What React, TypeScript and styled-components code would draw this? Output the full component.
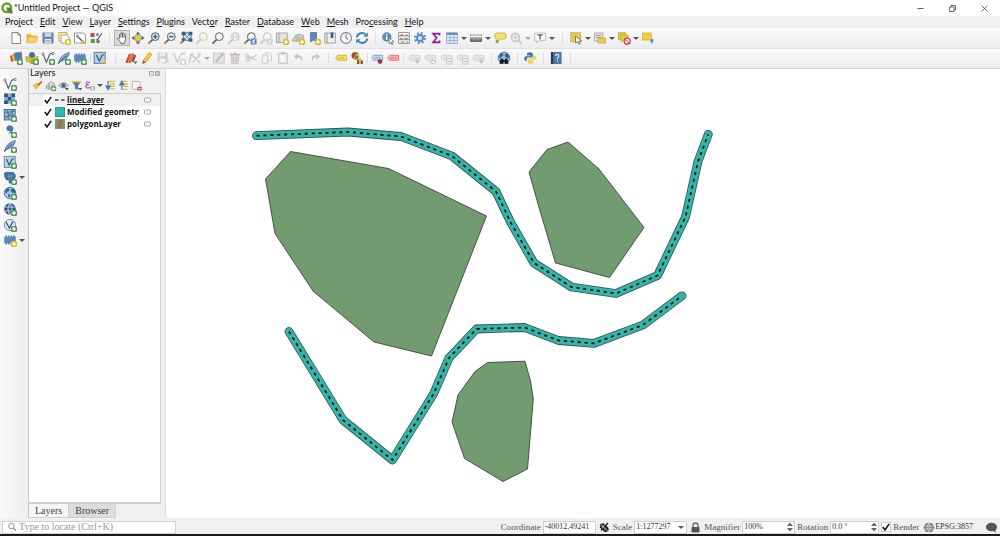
import React, { ReactNode } from 'react';
import styled, { createGlobalStyle, css } from 'styled-components';

const UI = 'Lato, "Open Sans", sans-serif';
const UI_BOLD = '"Open Sans", "Noto Sans", sans-serif';
const STATUS = '"Liberation Serif", serif';

const GlobalStyle = createGlobalStyle`
  * { box-sizing: border-box; }
  body { margin: 0; background: #f0f0f0; color: #111; font-family: ${UI}; font-size: 9px; line-height: 12px; }
  button, input, select { font: inherit; color: inherit; margin: 0; padding: 0; border: 0; background: none; }
  svg { display: block; }
`;

/* ---------- icon artwork, drawn on a 16 × 16 grid ---------- */

const BLUE = '#5a8ac0';
const NAVY = '#34618f';
const GREEN = '#4f9a52';
const YELLOW = '#f2cf3a';
const GREY = '#8d8d8d';

const Badge = ({ c = GREEN }: { c?: string }) => (
  <g>
    <rect x="9" y="9" width="6" height="6" rx="1.6" fill={c} />
    <path d="M12 10.2v3.6M10.2 12h3.6" stroke="#fff" strokeWidth="1.6" />
  </g>
);

const Lens = ({ c = '#5f5f5f', fill = '#f4f8fc', children }: { c?: string; fill?: string; children?: ReactNode }) => (
  <g>
    <path d="M6.6 9.6L2.4 13.6" stroke={c} strokeWidth="1.8" />
    <path d="M4 12L2.4 13.6" stroke="#d8b04a" strokeWidth="1.6" opacity={c === '#5f5f5f' ? 1 : 0} />
    <circle cx="9.3" cy="6.6" r="3.9" fill={fill} stroke={c} strokeWidth="1" />
    {children}
  </g>
);

const Page = ({ c = '#777' }: { c?: string }) => (
  <path d="M4 2.5h6l2.5 2.5v8.5H4zM10 2.5V5h2.5" fill="#fff" stroke={c} strokeWidth=".9" />
);

const Globe = ({ fill = '#a9c6e4', land = NAVY }: { fill?: string; land?: string }) => (
  <g>
    <circle cx="8" cy="8" r="5.8" fill={fill} stroke={NAVY} strokeWidth=".8" />
    <path d="M3.4 5.2l2.3-2 2 .8-.7 2-1.6.8-.6 1.8-1.4-.8zM8.6 4.2l2.8-.6 1.8 2.2-.6 2.6-2-.6-1.6-1.4zM6 9l2.4.8-.6 2.8-1.4-.6z" fill={land} />
  </g>
);

const Label = ({ fill, stroke }: { fill: string; stroke: string }) => (
  <g>
    <path d="M2.6 7.8l2-2.5h9v5h-9z" fill={fill} stroke={stroke} strokeWidth=".8" />
    <path d="M6 7v1.8M8.2 6.6v2.4M10.4 7v2" stroke={stroke} strokeWidth=".8" />
  </g>
);

const VLine = ({ c = '#4a5a60' }: { c?: string }) => (
  <g>
    <path d="M3 4l3.4 8.4L9.6 4.6q.8-1.4 3.4-1.2" fill="none" stroke={c} strokeWidth="1.1" />
    <path d="M2 3h2v2H2zM12 2.5h2v2h-2z" fill="#fff" stroke={c} strokeWidth=".6" />
  </g>
);

const art: Record<string, ReactNode> = {
  newFile: <Page />,
  open: <><path d="M2.5 12.5V4h4l1 1.5h5V7" fill="#e8b93a" /><path d="M2.5 12.8L4.6 7H14l-2 5.8z" fill="#f6d36a" stroke="#d9a52c" strokeWidth=".5" /></>,
  save: <><rect x="2.5" y="2.5" width="11" height="11" rx=".8" fill="#5f84a8" /><rect x="4.6" y="2.8" width="6.8" height="4" fill="#c9d8e6" /><rect x="4.6" y="9" width="6.8" height="4.2" fill="#e8eef4" /><path d="M5.5 11h5" stroke="#5f84a8" /></>,
  layout: <><path d="M2.8 2.5h8v8.6h-8z" fill="#fff4c4" stroke="#d8ad2b" /><path d="M5 5h6l2 2v6H5z" fill="#fff" stroke={GREY} strokeWidth=".8" /><Badge c="#e6bf25" /></>,
  layoutManager: <><path d="M2.5 3h9l2 2v8h-11z" fill="#fff" stroke={GREY} strokeWidth=".9" /><path d="M5 6l6.8 6.4" stroke="#666" strokeWidth="1.5" /><circle cx="5.4" cy="6" r="1.6" fill="#7d9cbb" /><path d="M10 11l3.6 2.8" stroke="#e0b422" strokeWidth="2" /></>,
  style: <><rect x="2.5" y="3" width="4" height="4" fill="#c9473f" /><circle cx="9.5" cy="4.5" r="1.5" fill={BLUE} /><path d="M14 3l-4 6-1.6 1" stroke="#555" strokeWidth="1.1" fill="none" /><rect x="2.8" y="9" width="4" height="4" fill={GREEN} /><circle cx="10" cy="11.6" r="1.8" fill="#777" /></>,
  hand: <path d="M5.6 8.6V4.2q.8-1.2 1.4 0V3q.8-1.2 1.5 0v.6q.8-1 1.5 0v1q.9-.8 1.4.2v4.6q0 2-1 2.8v1.4H6.8v-1.2L3.4 8.8q.4-1.4 2.2-.2zM7 4v3.6M8.5 3.6v4M10 4.4v3.4" fill="#fff" stroke="#4c4c4c" strokeWidth=".8" />,
  panSel: <><rect x="5.5" y="5.5" width="5" height="5" fill={YELLOW} stroke="#c79c1d" strokeWidth=".7" /><path d="M8 1.5l2.3 3H5.7zM8 14.5l2.3-3H5.7zM1.5 8l3-2.3v4.6zM14.5 8l-3-2.3v4.6z" fill={NAVY} /></>,
  zoomIn: <Lens fill="#cfe0f2"><path d="M9.3 4.4v4.4M7.1 6.6h4.4" stroke={NAVY} strokeWidth="1.4" /></Lens>,
  zoomOut: <Lens fill="#e3edf8"><path d="M7.1 6.6h4.4" stroke={NAVY} strokeWidth="1.4" /></Lens>,
  zoomFull: <><Lens fill="#d3e1f0" /><path d="M3.6 1.8h4v3.4h-4zM10.6 1.8h3.8v3.4h-3.8zM10.6 8.2h3.8v3.6h-3.8zM3.6 8.2h3v2h-3z" fill={NAVY} /><path d="M7.8 5.2l3 3M10.8 5.2l-3 3" stroke={BLUE} strokeWidth=".9" /></>,
  zoomSel: <Lens c="#c9c9c4" fill="#f6f3de" />,
  zoomLayer: <Lens c="#666" fill="#f2f2f2" />,
  zoomNative: <Lens c="#c4c4c4" fill="#f4f4f4"><path d="M7.4 5v3.4M11 5v3.4M9.2 5.4v.8M9.2 7.4v.8" stroke="#b8b8b8" strokeWidth=".9" /></Lens>,
  zoomLast: <><Lens /><rect x="8.6" y="8.6" width="6" height="6" rx="1" fill={BLUE} /><path d="M12.8 9.8L10.6 11.6l2.2 1.8" stroke="#fff" strokeWidth="1.1" fill="none" /></>,
  zoomNext: <><Lens c="#c6c6c6" fill="#f6f6f6" /><rect x="8.6" y="8.6" width="6" height="6" rx="1" fill="#cfd6dc" /><path d="M10.6 9.8l2.2 1.8-2.2 1.8" stroke="#fff" fill="none" /></>,
  mapView: <><path d="M2.5 3h10.8v9.5H2.5z" fill="#e4e4de" stroke="#a2a29c" strokeWidth=".9" /><path d="M5 3v9.5" stroke="#a2a29c" /><Badge c="#dfb92b" /></>,
  view3d: <><path d="M2 11l3.4-5.5q4-2.6 8 0l.6 6z" fill="#d0d0ca" stroke="#9c9c98" strokeWidth=".8" /><path d="M5 8h8M8 5l-1 6" stroke="#9c9c98" strokeWidth=".6" /><Badge c="#dfb92b" /></>,
  bookmarkAdd: <><path d="M4.5 2.5h6v9.6l-3-2-3 2z" fill={BLUE} stroke={NAVY} strokeWidth=".6" /><Badge c="#dfb92b" /></>,
  bookmark: <><path d="M2.8 3h10.6v10H2.8z" fill="#eeeeea" stroke="#9a9a96" strokeWidth=".9" /><path d="M5 3v10" stroke="#9a9a96" /><path d="M8.6 2.6h2.8v6L10 7.4 8.6 8.6z" fill={NAVY} /></>,
  clock: <><circle cx="8" cy="8" r="5.4" fill="#f7f9fb" stroke="#75818c" strokeWidth="1.1" /><path d="M8 4.4V8l2 1.6" stroke="#666" fill="none" /></>,
  refresh: <><path d="M2.8 7.4a5.2 5.2 0 0 1 9-2.6M13.2 8.6a5.2 5.2 0 0 1-9 2.6" stroke="#3f7fc0" strokeWidth="2" fill="none" /><path d="M13.8 2.4v4.4H9.4zM2.2 13.6V9.2h4.4z" fill="#3f7fc0" /></>,
  identify: <><circle cx="6.8" cy="7" r="4.7" fill={BLUE} /><path d="M6.8 6.2v3.6M6.8 4v1.3" stroke="#fff" strokeWidth="1.5" /><path d="M9 7.6l5 4.2-2.4.2 1.2 2.2-1 .4-1-2.2-1.6 1.4z" fill="#fff" stroke="#444" strokeWidth=".6" /></>,
  abacus: <><path d="M2.6 2.5h10.8v11H2.6zM2.6 6h10.8M2.6 9.6h10.8" fill="none" stroke="#85857e" strokeWidth=".8" /><path d="M4.4 5.2h3M9.6 5.2h2" stroke="#c0605a" strokeWidth="1.4" /><path d="M4 8.7h2.6M8.4 8.7h3.4" stroke="#5faa62" strokeWidth="1.4" /><path d="M5 12h3.4M10 12h2" stroke="#858580" strokeWidth="1.2" /></>,
  gear: <><circle cx="8" cy="8" r="3" fill="#dfe9f4" stroke={BLUE} strokeWidth="2" /><circle cx="8" cy="8" r="5" fill="none" stroke={BLUE} strokeWidth="2" strokeDasharray="2 1.93" /></>,
  sigma: <path d="M11.6 5.4V3.6H5L8.6 8 5 12.4h6.6v-1.8" fill="none" stroke="#8c1a96" strokeWidth="1.6" />,
  table: <><path d="M2.5 2.8h11v10.6h-11z" fill="#e5eef7" stroke="#8aa7c4" strokeWidth=".8" /><path d="M2.5 3.8h11" stroke={BLUE} strokeWidth="2.2" /><path d="M2.5 7.6h11M2.5 10.4h11M6 5v8.4M9.8 5v8.4" stroke="#8aa7c4" strokeWidth=".8" /></>,
  measure: <><path d="M2.4 5h11.2M2.6 4v2M13.4 4v2" stroke="#8d8d8d" strokeWidth=".8" /><rect x="2" y="7.4" width="12" height="4.6" fill="#6e6e6e" /><path d="M4 7.4v2M6 7.4v2.6M8 7.4v2M10 7.4v2.6M12 7.4v2" stroke="#e2e2e2" strokeWidth=".8" /></>,
  tip: <><path d="M5 3h7q2 0 2 2v2q0 2-2 2H8.6L5 12.6 5.6 9H5Q3 9 3 7V5q0-2 2-2z" fill="#f4e06e" stroke="#c0a838" strokeWidth=".8" /><circle cx="5" cy="11.6" r="1.6" fill="#7d9a58" /></>,
  action: <><circle cx="7.4" cy="7.4" r="4" fill="#ececec" stroke="#c6c6c6" strokeWidth="1.6" /><circle cx="7.4" cy="7.4" r="1.4" fill="#c4c4c4" /><path d="M10 10l3.6 3.6" stroke="#c6c6c6" strokeWidth="2" /></>,
  text: <><path d="M2.6 3h11v7.6H7.4L4.4 13v-2.4H2.6z" fill="#f6f6f4" stroke="#b0b0ae" strokeWidth=".8" /><path d="M5.4 4.8h5.4M8.1 4.8v4.6" stroke="#55606c" strokeWidth="1.3" /></>,
  select: <><rect x="2.8" y="2.8" width="9.6" height="9" fill={YELLOW} stroke="#8a8a70" strokeWidth=".9" strokeDasharray="1.8 1" /><path d="M7.4 6l6.4 5-2.8.2 1.4 2.6-1.2.6-1.4-2.8-2 1.8z" fill="#fff" stroke="#4b4b4b" strokeWidth=".7" /></>,
  selectForm: <><rect x="2.6" y="3" width="8.4" height="8" fill="#e9e9e4" stroke="#9c9c98" strokeWidth=".8" /><path d="M4 5.4h5.4M4 7.4h5.4" stroke="#9c9c98" /><rect x="6" y="8" width="7.6" height="5" fill={YELLOW} stroke="#b8a040" strokeWidth=".7" /></>,
  deselect: <><rect x="2.4" y="2.8" width="7" height="6.4" fill={YELLOW} stroke="#b79f38" strokeWidth=".8" /><rect x="5" y="5" width="7" height="6" fill={YELLOW} stroke="#b79f38" strokeWidth=".8" /><circle cx="11.2" cy="11.2" r="3" fill="#fff" stroke="#d94040" strokeWidth="1.3" /><path d="M9.2 9.4l4 3.8" stroke="#d94040" /></>,
  location: <><rect x="2.6" y="3" width="8.6" height="7" fill={YELLOW} stroke="#c2a63c" strokeWidth=".7" /><path d="M11.8 8.4a2 2 0 0 1 1.8 2.6l-1.8 3.4-1.8-3.4a2 2 0 0 1 1.8-2.6z" fill={BLUE} stroke="#fff" strokeWidth=".4" /></>,

  dataSource: <><path d="M2 6l5-2.4 1 6L3.4 12z" fill="#c9473f" /><path d="M3.6 5.4l5-2 1.6 6-5 2.2z" fill="#e5b93c" /><path d="M6.4 3l7-.8.6 7.2-6.4 1z" fill="#4a7db5" stroke={NAVY} strokeWidth=".5" /><Badge /></>,
  geopackage: <><path d="M2 6.4l6-2.8 6 2.8-6 2.8z" fill="#f6dc7a" /><path d="M2 6.4l6 2.8v4.6l-6-3zM14 6.4L8 9.2v4.6l6-3z" fill="#e5bb33" stroke="#8d7626" strokeWidth=".5" /><circle cx="8" cy="5" r="3" fill="#47749f" /><Badge /></>,
  vector: <><VLine /><Badge /></>,
  shape: <><path d="M2.4 13.4Q4 5 13.4 2.4q-1 7-8 8.6z" fill="#7fa3cc" stroke={NAVY} strokeWidth=".7" /><path d="M2.2 13.8L10 6" stroke={NAVY} /><Badge /></>,
  memory: <><path d="M3.6 3.4h1.4v9.2H3.6zM6.2 3.4h1.4v9.2H6.2zM8.8 3.4h1.4v9.2H8.8zM11.4 3.4h1.4v9.2h-1.4z" fill="#3c6a9c" /><rect x="2.2" y="4.8" width="11.6" height="6.4" rx=".6" fill="#5a8ac0" /><Badge /></>,
  memoryYellow: <><path d="M3.6 3.4h1.4v9.2H3.6zM6.2 3.4h1.4v9.2H6.2zM8.8 3.4h1.4v9.2H8.8zM11.4 3.4h1.4v9.2h-1.4z" fill="#3c6a9c" /><rect x="2.2" y="4.8" width="11.6" height="6.4" rx=".6" fill="#5a8ac0" /><Badge c="#e4bd2a" /></>,
  virtual: <><rect x="2.2" y="2.4" width="11" height="11" fill="#b9cfe4" stroke="#5d84ab" strokeWidth=".9" /><path d="M4.4 5l2.8 6L10 5.4l1.8-.8" stroke="#2f506f" strokeWidth="1.1" fill="none" /><Badge /></>,
  virtualNew: <><rect x="2.2" y="2.4" width="11" height="11" fill="#b9cfe4" stroke="#5d84ab" strokeWidth="1.1" /><path d="M4.4 5l2.8 6L10 5.4l1.8-.8" stroke="#2f506f" strokeWidth="1.1" fill="none" /><path d="M9 13.6l4.6-.4V9z" fill="#e8c53a" /></>,
  edits: <><path d="M2.4 12.4l3.6-9 2 .6-3.4 9z" fill="#c84a2e" /><path d="M5.4 12.4l3.6-9 2 .8-3.4 8.6z" fill="#e0703c" stroke="#8c3a20" strokeWidth=".4" /><path d="M8.4 11.6l2.8-7 2 .8-2.6 6.6z" fill="#a84328" /><path d="M10.4 11.6h4l-2 2.4z" fill="#555" /></>,
  pencil: <><path d="M4 10.6L10.4 2.6l2.6 2-6.4 8z" fill="#f0cc3c" stroke="#b79220" strokeWidth=".7" /><path d="M4 10.6l2.6 2L3.2 14z" fill="#6b5c44" /></>,
  saveOff: <><rect x="2.5" y="2.5" width="10" height="10" rx=".8" fill="#cfcfcf" /><rect x="4.6" y="2.8" width="5.8" height="3.6" fill="#efefef" /><rect x="4.6" y="8.6" width="6" height="4" fill="#f3f3f3" /><path d="M9 13.6l4.6-4" stroke="#d2d2d2" strokeWidth="1.6" /></>,
  vectorOff: <><VLine c="#c6c6c6" /><Badge c="#d0d3ce" /></>,
  vertexOff: <path d="M3 4h3M4.4 4l-2 9M5 5l8 8M13 5l-7 7M10 4h4" stroke="#c4c4c4" strokeWidth="1.2" fill="none" />,
  editTable: <><rect x="2.6" y="3" width="10.6" height="10" fill="#e4e4e0" stroke="#cbcbc8" /><path d="M5 11.6L12 3.6" stroke="#b6b6b6" strokeWidth="1.8" /></>,
  trash: <><path d="M3.8 5.4h8.4l-.8 8H4.6z" fill="#ded7d5" stroke="#c6bebc" strokeWidth=".8" /><path d="M2.8 4.4h10.4M6.4 3h3.2M6.4 7v5M9.6 7v5" stroke="#beb6b4" strokeWidth="1.1" /></>,
  cut: <><path d="M13.6 5L6 9M13.6 10.4L5 6.4" stroke="#c0c0c0" strokeWidth="1.2" /><circle cx="4" cy="5.8" r="1.6" fill="none" stroke="#c0c0c0" /><circle cx="4.8" cy="10" r="1.6" fill="none" stroke="#c0c0c0" /></>,
  copy: <path d="M3.4 5h5.4v8H3.4zM6.4 5V2.6h4l2 2v6H8.8" fill="#f4f4f4" stroke="#c8c8c8" strokeWidth=".9" />,
  paste: <><rect x="3.6" y="3.4" width="8.8" height="10" fill="#e6e6e3" stroke="#c6c6c3" /><rect x="5.4" y="5.4" width="5.2" height="6.4" fill="#f8f8f8" /><path d="M6 3h4" stroke="#bababa" strokeWidth="1.8" /></>,
  undo: <path d="M6.6 3.2L3 6.4l3.6 3.2V7.4q4-.4 3.6 4.6 3.6-6.4-3.6-6.8z" fill="#c4c4c4" />,
  redo: <path d="M9.4 3.2L13 6.4 9.4 9.6V7.4q-4-.4-3.6 4.6-3.6-6.4 3.6-6.8z" fill="#c4c4c4" />,
  labelOn: <Label fill="#fbe24c" stroke="#c4a92c" />,
  diagram: <><circle cx="6.4" cy="5.8" r="3.8" fill="#f0c930" /><path d="M6.4 5.8V2a3.8 3.8 0 0 0-3.8 3.8q0 2 1.4 3z" fill="#d0342c" /><path d="M6.4 5.8h3.8a3.8 3.8 0 0 1-5.4 3.4z" fill={GREEN} /><path d="M6.4 5.8V2a3.8 3.8 0 0 1 3 1.4z" fill={GREEN} /><path d="M8 9.4h2V14H8z" fill="#d0342c" /><path d="M10 8h2v6h-2z" fill="#e8b92c" /><path d="M12 10.6h1.8V14H12z" fill="#2f6e34" /></>,
  labelPin: <><Label fill="#c3d8ef" stroke="#6e94c0" /><circle cx="11" cy="11.6" r="2.3" fill="#a83232" /></>,
  labelRed: <Label fill="#fbb4b4" stroke="#e06060" />,
  labelOff: <><Label fill="#e9e9e4" stroke="#ccccc6" /><circle cx="11.4" cy="11.4" r="2" fill="#c9c3c0" /></>,
  labelOffEye: <><Label fill="#e9e9e4" stroke="#ccccc6" /><path d="M8 11.8q3-3 6 0-3 3-6 0z" fill="#fff" stroke="#bbb" /></>,
  labelOffBox: <><Label fill="#e9e9e4" stroke="#ccccc6" /><rect x="8.6" y="9" width="5.4" height="5" fill="#f4f4f4" stroke="#c9c9c9" /><path d="M9.6 11.5h3.4" stroke="#bbb" /></>,
  binoculars: <><Globe fill="#9dbddd" /><path d="M3.4 13.8l1.4-5h2l.6 1.6h1.2L9.2 8.8h2l1.4 5H9.2L8.6 12H7.4l-.6 1.8z" fill="#151515" /></>,
  python: <><path d="M8 2.2q-3 0-3 1.8v1.6h3.2v.6H3.8Q2.2 6.4 2.2 8.4t1.4 2.4h1.2V9q0-1.4 1.6-1.4h3q1.4 0 1.4-1.4V4q0-1.8-2.8-1.8z" fill="#3c74a8" /><path d="M8.4 13.8q3 0 3-1.8v-1.6H8.2v-.6h4.2q1.6-.2 1.6-2.2t-1.4-2.4h-1v1.8Q11.6 8.4 10 8.4H7.2q-1.4 0-1.4 1.4V12q0 1.8 2.6 1.8z" fill="#f4ce46" /></>,
  help: <><rect x="2.8" y="2" width="10.8" height="12" fill="#4b78a8" /><path d="M3 2h2.2v12H3z" fill="#2c3e52" /><path d="M7.4 6q0-1.6 1.8-1.6T11 6q0 1-1.6 2v1.4M9.4 10.6v1.2" stroke="#e8eef6" strokeWidth="1.1" fill="none" /></>,

  raster: <><rect x="2.2" y="2.4" width="11" height="10.6" fill="#8fb0d0" /><path d="M2.2 2.4h3.6V6H2.2zM9.4 2.4H13V6H9.4zM5.8 6h3.6v3.6H5.8zM2.2 9.6h3.6V13H2.2z" fill="#2c5582" /><Badge /></>,
  mesh: <><rect x="2.2" y="2.4" width="11" height="10.6" fill="#9cbad6" stroke={NAVY} strokeWidth=".8" /><path d="M2.2 6l11-2M2.2 9.8L13.2 8M5.6 2.4L7 13M10 2.4L11 13M2.2 2.4L13 13M2.2 13L13 2.4" stroke={NAVY} strokeWidth=".7" /><Badge /></>,
  comma: <><path d="M4.6 4.4q1-2.4 4-2t2.8 3.8Q10.6 10 6 11q2-1.6 2-3Q3.6 8 4.6 4.4z" fill="#4a7aab" /><Badge /></>,
  postgres: <><path d="M2.6 3q2-1.2 4-.4 3-.8 5.2.2 2 1.6 1.4 4.6l-2 2.4-1.6.2v3H7.2V9.6L4.6 10Q2 7 2.6 3z" fill="#4373a3" stroke="#2c4c6c" strokeWidth=".7" /><path d="M7 4.6v4M10 4.6l-.4 3" stroke="#a8c3dd" strokeWidth=".7" /><Badge /></>,
  wms: <><Globe /><Badge /></>,
  wcs: <><circle cx="8" cy="8" r="5.8" fill="#2f5274" /><path d="M2.4 6h11.2M2.4 10h11.2M8 2.2q-4 5.8 0 11.6M8 2.2q4 5.8 0 11.6" stroke="#b9d0e6" strokeWidth="1.1" fill="none" /><Badge /></>,
  wfs: <><circle cx="8" cy="8" r="5.6" fill="#dbe8f4" stroke="#5d84ab" strokeWidth=".9" /><path d="M4 5l3.4 6L11 4.6" stroke="#2f506f" strokeWidth="1.2" fill="none" /><Badge /></>,

  brush: <><path d="M2.6 8l5-3 2.4 3.4-4 4z" fill="#f0c44a" stroke="#c69628" strokeWidth=".6" /><path d="M8 6.6l4.6-4.2 1.4 1.4-4 4.6z" fill="#d4583a" /></>,
  group: <><path d="M5 12.6V6l4-3 4 3v6.6z" fill="#dcdcdc" stroke="#858585" strokeWidth=".9" /><path d="M3 12.6V7.4M7 12V7M10.4 12V7" stroke="#858585" /><Badge /></>,
  eye: <><path d="M2 8q6-6.4 12 0-6 5.6-12 0z" fill="#e6edf3" stroke="#68747e" strokeWidth="1" /><circle cx="8" cy="7.8" r="2.7" fill="#41678b" /><path d="M9.6 11h5l-2.4 3z" fill="#555" /></>,
  filter: <><path d="M2 3h12L10 8v5.4l-4-1.8V8z" fill="#4d7cac" /><path d="M2 3.4h12" stroke="#e8c53a" strokeWidth="2" /><path d="M10 11h5l-2.4 3z" fill="#555" /></>,
  expression: <><path d="M9 4.2Q3.6 2.6 4 5.2q.2 1.8 3.4 1.8Q3.2 7.2 3.4 9.4q.6 2.6 5.2 1" fill="none" stroke="#9a4ca0" strokeWidth="1.3" /><path d="M10.8 9.4H9.6v4h1.2M12.4 9.4h1.2v4h-1.2" stroke="#777" fill="none" /></>,
  expand: <><path d="M5.4 3h8M7.4 6h6M7.4 9h6M7.4 12h6" stroke="#d8b638" strokeWidth="1.4" /><path d="M5 2.6v6.8M2.4 8.6h5.2L5 13z" stroke="#3f77b0" fill="#3f77b0" strokeWidth="1.4" /></>,
  collapse: <><path d="M4 3h8M8.6 6h5M8.6 9h5M5 12.6h8" stroke="#d8b638" strokeWidth="1.4" /><path d="M6 13V6.6M3.4 7.4h5.2L6 3z" stroke="#3f77b0" fill="#3f77b0" strokeWidth="1.4" /></>,
  remove: <><rect x="2.8" y="3" width="9.6" height="9.6" rx="1" fill="#fbfbfb" stroke="#9a9a9a" strokeWidth=".9" /><rect x="9" y="9.6" width="5.6" height="4.6" rx="1" fill="#dc5656" /><path d="M10.4 12h3" stroke="#fff" /></>,
};

const Icon = ({ name, size = 16 }: { name: string; size?: number }) => (
  <svg width={size} height={size} viewBox="0 0 16 16" aria-hidden="true">{art[name]}</svg>
);

/* ---------- shared parts ---------- */

const Window = styled.div`
  display: flex; flex-direction: column; min-height: 100vh; background: #f0f0f0; border-bottom: 2px solid #1b1b1b;
`;
const TitleBar = styled.header`
  display: flex; align-items: center; height: 16px; padding-left: 1px; background: #fff;
`;
const Title = styled.h1`
  flex: 1; margin: 0 0 0 1px; font-size: 9px; font-weight: 400; line-height: 16px;
`;
const WindowButton = styled.button`
  display: grid; place-items: center; width: 32px; height: 16px;
`;
const MenuBar = styled.nav`
  display: flex; gap: 7px; height: 12px; padding-left: 5px;
`;
const MenuItem = styled.button`
  line-height: 12px; white-space: nowrap;
  u { text-underline-offset: 1px; text-decoration-thickness: 1px; }
`;
const ToolBar = styled.div`
  display: flex; align-items: center; height: 20px; padding-left: 8px;
  background: linear-gradient(#fafafa, #ededed);
  & + & { box-shadow: inset 0 1px #e2e2e2; }
`;
const Tool = styled.button<{ $on?: boolean; $w?: number }>`
  display: grid; place-items: center; flex: none; width: ${p => p.$w ?? 16}px; height: 16px;
  ${p => p.$on && css`background: #dadada; outline: 1px solid #b4b4b4; outline-offset: -1px;`}
`;
const Grip = styled.span<{ $w: number }>`
  flex: none; width: ${p => p.$w}px; height: 10px;
  background: linear-gradient(#dcdcdc, #dcdcdc) center / 1px 100% no-repeat;
`;
const Caret = styled.span<{ $off?: boolean }>`
  flex: none; width: 8px; display: grid; place-items: center;
  &::before { content: ''; border: 3px solid transparent; border-bottom: 0; border-top-color: ${p => (p.$off ? '#aaa' : '#555')}; }
`;
const Body = styled.main`
  display: flex; flex: 1; border-top: 1px solid #d2d2d2;
`;
const SideBar = styled.aside`
  flex: none; width: 29px; padding: 7px 0 0 2px; background: linear-gradient(90deg, #fafafa, #eee); border-right: 1px solid #c6c6c6;
`;
const SideTools = styled.div`
  display: grid; grid-auto-rows: minmax(0, 1fr); height: 172px;
`;
const SideRow = styled.div`
  display: flex; align-items: center;
`;
const Dock = styled.section`
  flex: none; display: flex; flex-direction: column; width: 132px; margin-right: 4px;
`;
const DockTitle = styled.div`
  display: flex; align-items: center; height: 8px; padding: 0 1px; gap: 1px;
  h2 { flex: 1; margin: 0; font-size: 9px; font-weight: 400; line-height: 8px; }
`;
const DockTools = styled.div`
  display: flex; align-items: center; height: 16px; padding-left: 2px;
`;
const Tree = styled.ul`
  flex: 1; margin: 0; padding: 0; list-style: none; background: #fff; border: 1px solid #cfcfcf; border-width: 1px 1px 2px 0;
`;
const TreeRow = styled.li<{ $active?: boolean }>`
  display: flex; align-items: center; gap: 4px; height: 12px; padding: 0 8px 0 14px;
  background: ${p => (p.$active ? '#f0f0f0' : '#fff')};
`;
const Check = styled.label`
  display: flex; align-items: center; flex: 1; min-width: 0; gap: 2px;
`;
const Box = styled.span<{ $framed?: boolean }>`
  display: grid; flex: none; width: 10px; height: 10px; background: #fff; border: 1px solid ${p => (p.$framed ? '#ccc' : 'transparent')};
  > * { grid-area: 1 / 1; width: 8px; height: 8px; }
  input { appearance: none; }
  svg { pointer-events: none; visibility: hidden; }
  input:checked + svg { visibility: visible; }
`;
const LayerName = styled.span<{ $active?: boolean }>`
  flex: 1; min-width: 0; overflow: hidden; white-space: nowrap; font-family: ${UI_BOLD}; font-size: 8px; font-weight: 700;
  text-decoration: ${p => (p.$active ? 'underline' : 'none')};
`;
const Tabs = styled.div`
  display: flex; height: 14px; font-family: ${STATUS}; font-size: 10px;
`;
const Tab = styled.button<{ $on?: boolean }>`
  padding: 0 6px; line-height: 13px; color: #444; border: 1px solid #cfcfcf; border-top: 0; border-left: 0;
  background: ${p => (p.$on ? '#f6f6f6' : '#dcdcdc')};
`;
const Canvas = styled.div`
  flex: 1; min-width: 0; background: #fff; border-left: 1px solid #dedede;
  > svg { width: 100%; height: auto; }
`;
const StatusBar = styled.footer`
  display: flex; align-items: center; justify-content: space-between; height: 16px; padding: 2px 2px 0;
  font-family: ${STATUS}; font-size: 9px; color: #555;
`;
const StatusItems = styled.div`
  display: flex; align-items: center; gap: 2px;
`;
const Field = styled.label`
  display: flex; align-items: center; gap: 2px; white-space: nowrap;
`;
const Frame = styled.span<{ $w: number }>`
  display: flex; align-items: center; width: ${p => p.$w}px; height: 13px; padding: 0 1px; background: #fff; border: 1px solid #cfcfcf; font-size: 8px;
  input, select { flex: 1; min-width: 0; width: 100%; appearance: none; outline: 0; color: #333; }
  input::placeholder { color: #999; opacity: 1; }
`;
const Locator = styled(Frame)`
  padding: 0 3px; gap: 2px; font-size: 10px;
`;
const IconButton = styled.button`
  display: flex; align-items: center; font-size: 8px; color: #333;
`;

const Tick = () => (
  <svg viewBox="0 0 8 8"><path d="M.8 4l2.2 3L7.2.8" fill="none" stroke="#111" strokeWidth="1.5" /></svg>
);
const Spin = () => (
  <svg width="6" height="10" viewBox="0 0 6 10"><path d="M0 4l3-3.6L6 4zM0 6l3 3.6L6 6z" fill="#666" /></svg>
);

/* ---------- content ---------- */

const menus: [string, string, string][] = [
  ['Pro', 'j', 'ect'], ['', 'E', 'dit'], ['', 'V', 'iew'], ['', 'L', 'ayer'], ['', 'S', 'ettings'], ['', 'P', 'lugins'],
  ['Vect', 'o', 'r'], ['', 'R', 'aster'], ['', 'D', 'atabase'], ['', 'W', 'eb'], ['', 'M', 'esh'], ['Pro', 'c', 'essing'], ['', 'H', 'elp'],
];

/* A number is a grip of that width, "v" an arrow of a drop-down, "x" a disabled one. */
type Entry = string | number;
const mainTools: Entry[] = [
  'newFile', 'open', 'save', 'layout', 'layoutManager', 'style', 10,
  'hand', 'panSel', 'zoomIn', 'zoomOut', 'zoomFull', 'zoomSel', 'zoomLayer', 'zoomNative', 'zoomLast', 'zoomNext',
  'mapView', 'view3d', 'bookmarkAdd', 'bookmark', 'clock', 'refresh', 10,
  'identify', 'abacus', 'gear', 'sigma', 'table', 'v', 'measure', 'v', 'tip', 'action', 'x', 'text', 'v', 12,
  'select', 'v', 'selectForm', 'v', 'deselect', 'v', 'location',
];
const editTools: Entry[] = [
  'dataSource', 'geopackage', 'vector', 'shape', 'memory', 4, 'virtualNew', 15,
  'edits', 'pencil', 'saveOff', 'vectorOff', 'vertexOff', 'x', 'editTable', 'trash', 'cut', 'copy', 'paste', 'undo', 'redo', 10,
  'labelOn', 'diagram', 4, 'labelPin', 'labelRed', 5, 'labelOff', 'labelOffEye', 'labelOffBox', 'labelOffBox', 'labelOff', 10,
  'binoculars', 10, 'python', 10, 'help', 12,
];
const sideTools: Entry[][] = [
  ['vector'], ['raster'], ['mesh'], ['comma'], ['shape'], ['virtual'], ['postgres', 'v'], ['wms'], ['wcs'], ['wfs'], ['memoryYellow', 'v'],
];
const dockTools: Entry[] = ['brush', 'group', 'eye', 'filter', 'expression', 'v', 'expand', 'collapse', 'remove'];

const Tools = ({ items, width, size }: { items: Entry[]; width?: number; size?: number }) => (
  <>
    {items.map((t, i) =>
      typeof t === 'number' ? <Grip key={i} $w={t} />
        : t === 'v' || t === 'x' ? <Caret key={i} $off={t === 'x'} />
          : <Tool key={i} type="button" aria-label={t} $on={t === 'hand'} $w={width}><Icon name={t} size={size} /></Tool>)}
  </>
);

const swatches: Record<string, ReactNode> = {
  line: <path d="M0 5h3.500M6 5h3.500" stroke="#1d4a55" strokeWidth="1.4" />,
  buffer: <rect x=".5" y=".5" width="9" height="9" fill="#33b5a7" stroke="#2a9a8e" />,
  polygon: <><rect width="10" height="10" fill="#729b6f" /><path d="M3 8.500l1.200-6L7 1.500 5.800 7.500z" fill="#d9663a" stroke="#8a4a2a" strokeWidth=".5" /></>,
};
const layers = [
  { name: 'lineLayer', swatch: 'line', active: true },
  { name: 'Modified geometry', swatch: 'buffer', active: false },
  { name: 'polygonLayer', swatch: 'polygon', active: false },
];

const polygons = [
  '290.5,151.5 388.5,168.5 486.5,216 431.5,356 374,342 313,291 275,233.5 265.5,179',
  '547,149.5 568,142 599,169 644,227.5 609.5,277.5 555.5,263 538,204 529,172',
  '487.5,362.5 525,361.2 530.5,381 533.3,399 527.5,469 503,481.5 464.5,458.5 452,422 458,395 475,371.5',
];
const lines = [
  '256.5,135.7 348,132 401,136.5 452,156 496,191.5 511,223 534,263 571.5,287 616,293.5 657.5,275.5 685.5,217 698,161.5 708.3,134.3',
  '289,331.5 343,420 392.5,460 433.5,394 449,358 476.5,329 524.5,327.5 558.5,340.5 594,343.3 643,325 682,295.8',
];

export default function App() {
  return (
    <Window>
      <GlobalStyle />
      <TitleBar>
        <svg width="12" height="12" viewBox="0 0 12 12" aria-hidden="true">
          <circle cx="5.8" cy="5.8" r="4.3" fill="none" stroke="#6a9f2e" strokeWidth="2.4" />
          <path d="M5.6 5.6h3L11.6 9v2.600H9L5.6 8z" fill="#4c8a2a" />
          <path d="M5.4 5.4h2.2l-2.2 2.2z" fill="#ee9a2c" />
        </svg>
        <Title>*Untitled Project — QGIS</Title>
        <WindowButton type="button" aria-label="Minimize">
          <svg width="7" height="7" viewBox="0 0 7 7"><path d="M.5 3.5h6" stroke="#444" strokeWidth=".9" /></svg>
        </WindowButton>
        <WindowButton type="button" aria-label="Restore">
          <svg width="7" height="7" viewBox="0 0 7 7"><path d="M.5 2h4.5v4.5H.5zM2 2V.5h4.5V5H5" fill="none" stroke="#444" strokeWidth=".8" /></svg>
        </WindowButton>
        <WindowButton type="button" aria-label="Close">
          <svg width="7" height="7" viewBox="0 0 7 7"><path d="M.5.5l6 6M6.5.5l-6 6" stroke="#444" strokeWidth=".8" /></svg>
        </WindowButton>
      </TitleBar>
      <MenuBar>
        {menus.map(([a, u, b]) => <MenuItem key={a + u + b} type="button">{a}<u>{u}</u>{b}</MenuItem>)}
      </MenuBar>
      <ToolBar><Tools items={mainTools} /></ToolBar>
      <ToolBar><Tools items={editTools} /></ToolBar>

      <Body>
        <SideBar>
          <SideTools>
            {sideTools.map((row, i) => <SideRow key={i}><Tools items={row} /></SideRow>)}
          </SideTools>
        </SideBar>
        <Dock>
          <DockTitle>
            <h2>Layers</h2>
            <button type="button" aria-label="Float panel"><svg width="5" height="5" viewBox="0 0 5 5"><path d="M.5.5h4v4h-4zM2 3l1.5-1.5" fill="none" stroke="#999" strokeWidth=".8" /></svg></button>
            <button type="button" aria-label="Close panel"><svg width="5" height="5" viewBox="0 0 5 5"><path d="M.5.5h4v4h-4zM1 1l3 3M4 1L1 4" fill="none" stroke="#999" strokeWidth=".8" /></svg></button>
          </DockTitle>
          <DockTools><Tools items={dockTools} width={13} size={13} /></DockTools>
          <Tree>
            {layers.map(l => (
              <TreeRow key={l.name} $active={l.active}>
                <Check>
                  <Box><input type="checkbox" defaultChecked /><Tick /></Box>
                  <svg width="10" height="10" viewBox="0 0 10 10" aria-hidden="true">{swatches[l.swatch]}</svg>
                  <LayerName $active={l.active}>{l.name}</LayerName>
                </Check>
                <svg width="9" height="8" viewBox="0 0 9 8" aria-hidden="true"><rect x="1.5" y="2" width="6" height="4" rx="1" fill="#fff" stroke="#8a94a0" strokeWidth=".8" /></svg>
              </TreeRow>
            ))}
          </Tree>
          <Tabs>
            <Tab type="button" $on>Layers</Tab>
            <Tab type="button">Browser</Tab>
          </Tabs>
        </Dock>
        <Canvas>
          <svg viewBox="166 69 834 449" role="img" aria-label="Map canvas">
            {polygons.map(p => <polygon key={p} points={p} fill="#729b6f" stroke="#3c463b" strokeWidth=".9" />)}
            {lines.map(p => (
              <g key={p} fill="none" strokeLinejoin="round" strokeLinecap="round">
                <polyline points={p} stroke="#35504e" strokeWidth="8.8" />
                <polyline points={p} stroke="#33b5a7" strokeWidth="7.2" />
                <polyline points={p} stroke="#06100f" strokeWidth="1.8" strokeLinecap="butt" strokeDasharray="3.1 3.8" />
              </g>
            ))}
          </svg>
        </Canvas>
      </Body>

      <StatusBar>
        <Locator $w={174}>
          <svg width="11" height="10" viewBox="0 0 12 10" aria-hidden="true"><circle cx="6" cy="4" r="3" fill="none" stroke="#777" strokeWidth=".9" /><path d="M8.2 6.2L11 9" stroke="#777" strokeWidth="1.1" /></svg>
          <input type="text" aria-label="Locate" placeholder="Type to locate (Ctrl+K)" />
        </Locator>
        <StatusItems>
          <Field>Coordinate<Frame $w={53}><input type="text" defaultValue="-40012,49241" /></Frame></Field>
          <IconButton type="button" aria-label="Toggle extents">
            <svg width="13" height="11" viewBox="-1 0 13 11"><path d="M1 2l3-1 5 4 1 3-2 2-4-2-3-3z" fill="#555" /><path d="M2 8.5L9 1M1 5l6 5M4 2l5 5" stroke="#111" strokeWidth="1.2" /><path d="M3 3.5l4 4M6 2.5l-3 4" stroke="#ddd" strokeWidth=".8" /></svg>
          </IconButton>
          <Field>Scale
            <Frame $w={53}><select defaultValue="1:1277297"><option>1:1277297</option></select><Caret /></Frame>
          </Field>
          <IconButton type="button" aria-label="Lock scale">
            <svg width="13" height="11" viewBox="0 0 13 11"><path d="M4 5V3.5a2.5 2.5 0 0 1 5 0V5" fill="none" stroke="#666" strokeWidth="1.3" /><rect x="2.5" y="5" width="8" height="5.5" rx=".8" fill="#555" /></svg>
          </IconButton>
          <Field>Magnifier<Frame $w={53}><input type="text" defaultValue="100%" /><Spin /></Frame></Field>
          <Field>Rotation<Frame $w={49}><input type="text" defaultValue="0.0 °" /><Spin /></Frame></Field>
          <Field><Box $framed><input type="checkbox" defaultChecked /><Tick /></Box>Render</Field>
          <IconButton type="button">
            <svg width="14" height="11" viewBox="0 0 14 11" aria-hidden="true"><ellipse cx="8" cy="5.5" rx="5.2" ry="4.8" fill="#777" /><path d="M3 4h10M3 7h10M8 .7v9.6M8 .7q-4 4.8 0 9.6M8 .7q4 4.8 0 9.6" fill="none" stroke="#ddd" strokeWidth=".7" /></svg>
            EPSG:3857
          </IconButton>
          <IconButton type="button" aria-label="Messages">
            <svg width="23" height="11" viewBox="-1 0 23 11"><ellipse cx="15.5" cy="5" rx="5.6" ry="4.3" fill="#555" /><path d="M16 8l4 2.8L19 7z" fill="#555" /></svg>
          </IconButton>
        </StatusItems>
      </StatusBar>
    </Window>
  );
}
